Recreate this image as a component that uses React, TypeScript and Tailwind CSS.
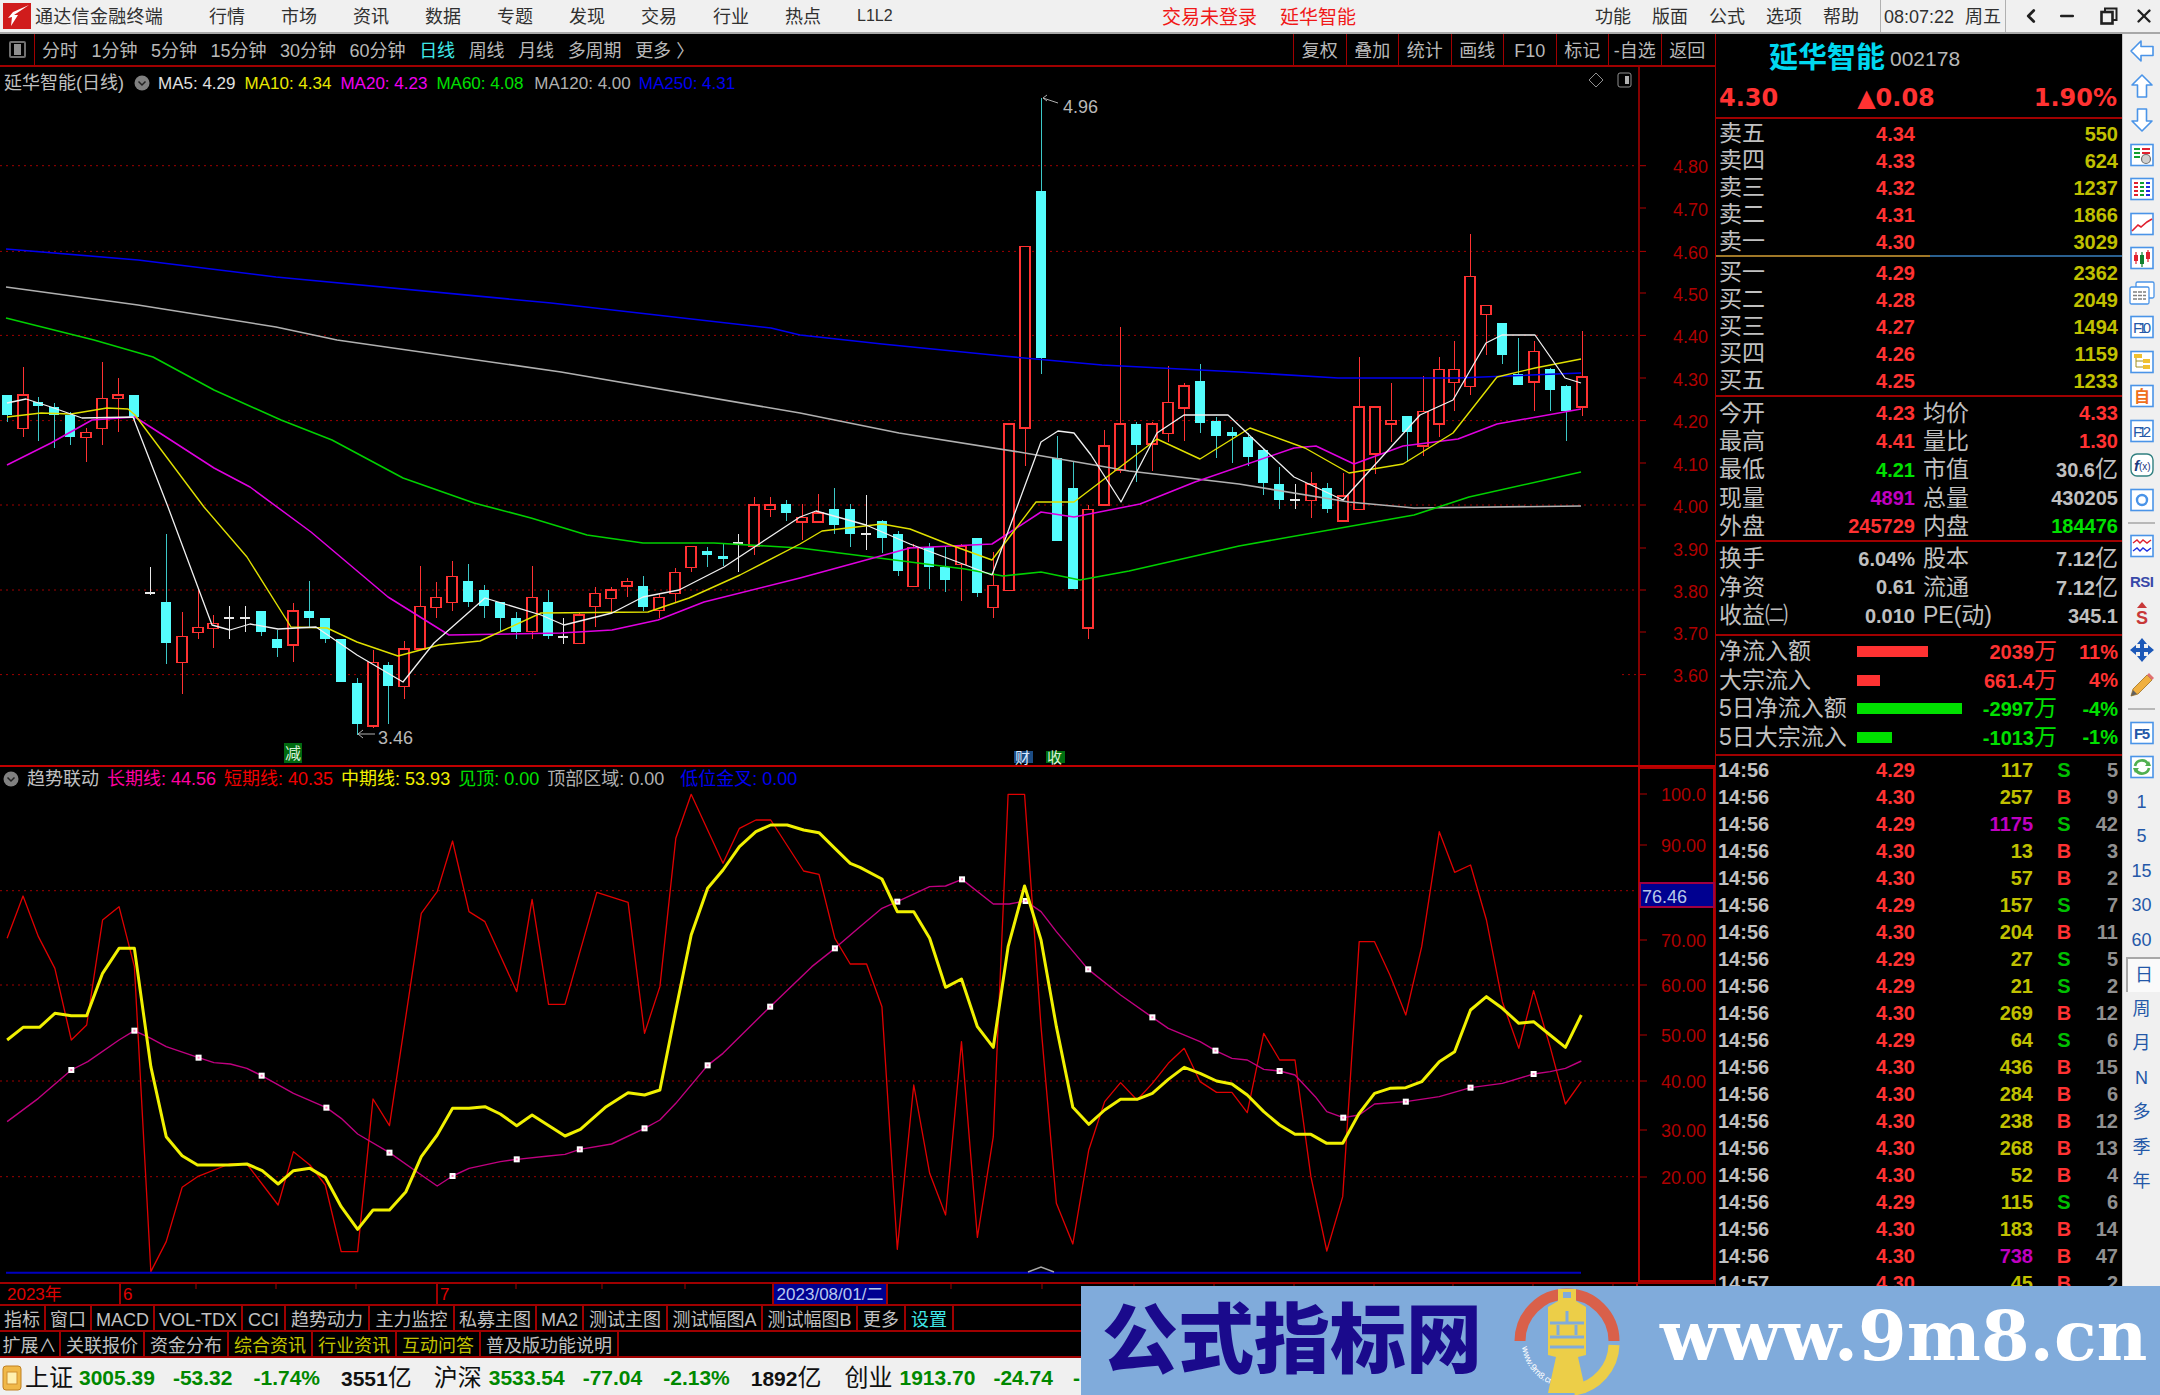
import { ChevronLeft, Minus, X } from "lucide-react";
import type { ReactNode } from "react";

type Pt = number[];

const RED = "#ff3232";
const CYAN = "#54fcfc";

// candles read from the chart: hi, bodyTop, bodyBottom, lo, kind (r red, c cyan, d doji)
type Raw = [number, number, number, number, "r" | "c" | "d"];
const leftRaw: Raw[] = [
  [165, 165, 225, 245, "c"], [80, 165, 265, 290, "r"], [170, 185, 198, 302, "c"], [190, 200, 225, 325, "c"], [215, 225, 290, 315, "c"],
  [265, 278, 292, 365, "r"], [65, 175, 265, 315, "r"], [115, 165, 175, 275, "r"], [165, 165, 230, 245, "c"], [682, 760, 760, 765, "d"],
  [583, 785, 910, 973, "c"], [817, 890, 968, 1063, "r"], [745, 863, 878, 897, "r"], [825, 850, 865, 923, "r"], [798, 835, 835, 897, "d"],
  [798, 835, 835, 875, "d"], [812, 812, 875, 888, "c"], [870, 898, 924, 950, "c"], [790, 813, 915, 965, "r"], [722, 812, 834, 860, "c"],
  [835, 835, 897, 910, "c"], [897, 897, 1027, 1027, "c"], [1015, 1028, 1153, 1185, "c"], [930, 967, 1158, 1165, "r"], [965, 975, 1037, 1153, "c"],
  [903, 927, 1040, 1078, "r"], [678, 800, 927, 927, "r"], [727, 772, 802, 835, "r"], [664, 710, 787, 812, "r"], [673, 722, 785, 800, "c"],
  [735, 750, 798, 835, "c"], [785, 785, 835, 875, "c"], [815, 835, 875, 897, "c"], [678, 772, 875, 897, "r"], [750, 785, 888, 897, "c"],
  [835, 890, 890, 912, "d"], [815, 825, 910, 910, "r"], [740, 760, 800, 862, "r"], [740, 750, 775, 820, "r"], [715, 725, 738, 772, "r"],
  [708, 737, 800, 812, "c"], [760, 772, 812, 835, "r"], [685, 697, 760, 787, "r"], [620, 620, 683, 695, "r"], [620, 632, 645, 682, "c"],
  [610, 647, 658, 678, "c"], [583, 608, 608, 695, "d"], [470, 495, 620, 645, "r"], [470, 495, 508, 532, "r"], [480, 493, 518, 542, "c"],
];
const rightRaw: Raw[] = [
  [950, 980, 990, 1030, "r"], [927, 970, 990, 990, "r"], [913, 960, 997, 1017, "c"], [950, 960, 1017, 1045, "c"], [930, 1018, 1018, 1053, "d"],
  [985, 988, 1027, 1060, "c"], [1010, 1018, 1100, 1110, "c"], [1040, 1047, 1134, 1134, "r"], [1037, 1047, 1090, 1140, "c"], [1047, 1090, 1120, 1147, "c"],
  [1040, 1045, 1085, 1168, "r"], [1027, 1027, 1148, 1158, "c"], [1058, 1132, 1182, 1205, "r"], [770, 770, 1144, 1144, "r"], [373, 373, 780, 865, "r"],
  [40, 248, 622, 658, "c"], [798, 847, 1033, 1033, "c"], [855, 913, 1140, 1140, "c"], [953, 962, 1228, 1252, "r"], [783, 820, 952, 952, "r"],
  [553, 770, 875, 880, "r"], [765, 770, 818, 900, "c"], [765, 770, 815, 875, "r"], [640, 722, 792, 810, "r"], [678, 685, 735, 808, "r"],
  [637, 675, 768, 790, "c"], [755, 763, 798, 847, "c"], [778, 788, 798, 857, "c"], [790, 800, 845, 865, "c"], [826, 828, 903, 930, "c"],
  [866, 904, 940, 960, "c"], [905, 940, 940, 960, "d"], [877, 905, 942, 980, "r"], [903, 914, 960, 970, "c"], [880, 932, 988, 988, "r"],
  [620, 733, 962, 962, "r"], [733, 733, 838, 883, "r"], [678, 763, 771, 810, "r"], [752, 752, 788, 855, "c"], [662, 743, 820, 843, "r"],
  [620, 648, 770, 800, "r"], [585, 648, 678, 742, "r"], [345, 440, 686, 705, "r"], [505, 505, 525, 617, "r"], [544, 544, 617, 637, "c"],
  [578, 658, 683, 683, "c"], [585, 608, 677, 742, "r"], [645, 648, 694, 742, "c"], [684, 685, 742, 808, "c"], [563, 665, 733, 752, "r"],
];
const toLeftY = (v: number) => 340 + v / 3;
const toRightY = (v: number) => 80 + v / 2.24;
const candles = [
  ...leftRaw.map((c) => ({ hi: toLeftY(c[0]), top: toLeftY(c[1]), bot: toLeftY(c[2]), lo: toLeftY(c[3]), kind: c[4] })),
  ...rightRaw.map((c) => ({ hi: toRightY(c[0]), top: toRightY(c[1]), bot: toRightY(c[2]), lo: toRightY(c[3]), kind: c[4] })),
];

const ma250 = "6,249 138,260 276,277 551,303 771,328 800,335 882,344 1003,356 1102,365 1239,372 1338,378 1458,378 1581,373";
const ma120 = "6,287 138,305 276,327 337,340 561,372 800,413 899,433 1019,452 1129,471 1239,484 1349,502 1414,508 1581,506";
const ma60 = "6,318 94,340 153,357 214,390 281,420 332,440 403,478 474,503 531,518 587,535 643,543 714,543 800,548 871,557 965,569 1003,576 1041,572 1080,580 1129,571 1239,546 1414,515 1469,497 1581,472";
const ma20 = "7,465 51,443 92,420 135,417 214,468 250,487 311,532 388,597 449,635 561,633 612,630 658,620 704,602 800,578 910,548 992,544 1041,512 1074,517 1140,504 1195,482 1294,448 1316,446 1354,464 1403,446 1458,439 1497,424 1581,409";
const ma10 = "7,417 41,413 71,414 107,408 128,409 135,415 204,507 247,557 291,627 327,628 357,642 398,656 439,645 480,641 541,613 648,612 689,598 740,575 800,544 822,531 882,524 910,529 948,544 992,560 1036,502 1074,502 1157,439 1200,459 1250,428 1305,448 1349,473 1403,464 1453,433 1497,377 1535,368 1581,359";
const ma5 = "7,403 26,399 51,407 82,418 133,417 168,507 212,625 230,630 250,624 278,629 316,627 357,655 403,682 434,643 485,598 541,615 564,625 612,613 643,597 679,590 724,567 800,517 816,511 866,525 910,544 992,575 1041,442 1058,431 1074,433 1091,455 1121,502 1157,433 1184,415 1228,415 1266,451 1294,477 1343,500 1420,415 1453,400 1486,343 1502,335 1535,335 1565,378 1581,383";

// sub chart lines, read in two parts
const subPts = (a: Pt[], b: Pt[]) =>
  [...a.map((p) => `${p[0] / 1.823},${760 + p[1] / 3}`), ...b.map((p) => `${860 + p[0] / 1.823},${760 + p[1] / 3}`)].join(" ");

const shortLine = subPts(
  [[13,535],[42,408],[70,530],[100,625],[130,840],[158,795],[187,480],[217,440],[245,620],[275,1535],[303,1445],[332,1282],[360,1250],[418,1212],[450,1212],[507,1335],[535,1175],[565,1215],[593,1275],[622,1475],[652,1475],[680,1017],[710,1097],[768,460],[797,395],[825,243],[855,455],[884,485],[942,695],[970,418],[1000,733],[1030,733],[1088,397],[1145,427],[1175,820],[1203,680],[1232,235],[1260,103],[1318,310],[1348,205],[1378,180],[1405,180],[1465,333],[1493,343],[1522,535],[1550,612]],
  [[12,612],[40,740],[68,1468],[98,975],[127,1240],[156,1365],[185,845],[214,1432],[243,1130],[270,103],[300,103],[330,800],[358,1330],[388,1452],[417,1170],[446,1025],[475,968],[505,1020],[533,970],[562,910],[591,865],[620,965],[650,997],[678,997],[706,1058],[736,820],[765,900],[793,900],[822,1250],[851,1473],[880,1310],[910,545],[938,545],[966,645],[995,765],[1024,560],[1056,215],[1084,337],[1113,315],[1142,480],[1171,725],[1201,865],[1228,692],[1258,860],[1286,1032],[1315,965]],
);
const midLine = subPts(
  [[13,840],[42,802],[72,802],[100,760],[130,767],[158,767],[187,640],[217,565],[245,565],[275,920],[303,1130],[332,1187],[360,1215],[418,1215],[450,1212],[478,1232],[507,1272],[535,1232],[565,1225],[593,1252],[622,1340],[652,1408],[680,1350],[710,1350],[740,1295],[768,1190],[797,1125],[825,1045],[855,1045],[884,1040],[912,1062],[942,1097],[970,1065],[1030,1128],[1058,1108],[1105,1040],[1145,998],[1175,1005],[1203,990],[1232,750],[1260,525],[1290,385],[1318,330],[1348,260],[1378,215],[1405,195],[1435,195],[1465,210],[1493,218],[1522,265],[1550,310]],
  [[0,322],[40,357],[68,455],[98,455],[127,535],[156,682],[185,657],[214,800],[243,862],[270,560],[300,378],[330,540],[358,800],[388,1042],[417,1093],[446,1050],[475,1018],[505,1018],[533,1000],[562,958],[591,922],[620,940],[650,963],[678,972],[706,1005],[736,1055],[765,1095],[793,1123],[822,1123],[851,1150],[880,1150],[910,1060],[938,1000],[966,985],[995,983],[1024,965],[1056,905],[1084,875],[1113,750],[1142,710],[1171,745],[1201,790],[1228,785],[1258,825],[1286,862],[1315,765]],
);
const longLine = subPts(
  [[13,1085],[70,1015],[130,930],[160,905],[217,840],[245,812],[275,835],[303,860],[362,893],[390,908],[420,912],[450,925],[477,947],[535,1000],[595,1043],[622,1075],[652,1122],[710,1178],[768,1245],[797,1278],[825,1248],[855,1225],[912,1205],[942,1198],[1000,1188],[1030,1183],[1057,1168],[1115,1152],[1175,1105],[1203,1080],[1232,1030],[1290,916],[1318,880],[1404,740],[1480,620],[1522,565]],
  [[0,500],[40,445],[68,425],[127,380],[156,378],[186,358],[243,432],[272,432],[302,423],[330,455],[358,515],[416,628],[475,705],[533,772],[562,805],[620,845],[648,872],[678,895],[706,900],[736,928],[765,933],[793,945],[830,1010],[851,1055],[881,1073],[910,1065],[938,1032],[995,1025],[1056,1010],[1113,983],[1171,970],[1228,942],[1258,935],[1286,925],[1315,903]],
);
const markers = [
  ...[[130,930],[245,812],[362,893],[477,947],[595,1043],[710,1178],[825,1248],[942,1198],[1057,1168],[1175,1105],[1290,916],[1404,740],[1522,565]].map((p) => [p[0] / 1.823, 760 + p[1] / 3]),
  ...[[68,425],[186,358],[302,423],[416,628],[533,772],[648,872],[765,933],[881,1073],[995,1025],[1113,983],[1228,942]].map((p) => [860 + p[0] / 1.823, 760 + p[1] / 3]),
];

function MainChart() {
  const levels = [["4.80", 165.7], ["4.70", 208], ["4.60", 251.4], ["4.50", 293], ["4.40", 335.4], ["4.30", 378], ["4.20", 420.6], ["4.10", 463], ["4.00", 505], ["3.90", 548], ["3.80", 590], ["3.70", 632], ["3.60", 674.6]] as [string, number][];
  return (
    <svg viewBox="0 67 1715 698" className="block w-[1715px] h-[698px]">
      {[165.7, 251.4, 335.4, 420.6, 505, 590].map((y) => (
        <line key={y} x1={0} x2={1638} y1={y} y2={y} stroke="#a00000" strokeWidth={1} strokeDasharray="2 4" />
      ))}
      <line x1={0} x2={538} y1={674.6} y2={674.6} stroke="#a00000" strokeDasharray="2 4" />
      <line x1={1622} x2={1638} y1={674.6} y2={674.6} stroke="#a00000" strokeDasharray="2 4" />
      <line x1={1639} x2={1639} y1={67} y2={765} stroke="#b00000" strokeWidth={1.5} />
      {levels.map(([t, y]) => (
        <g key={t}>
          <line x1={1640} x2={1646} y1={y} y2={y} stroke="#b00000" />
          <text x={1708} y={y + 7.5} textAnchor="end" fontSize={18} fill="#b00000">{t}</text>
        </g>
      ))}
      {candles.map((c, i) => {
        const x = Math.round(6.6 + 15.91 * i);
        if (c.kind === "d") {
          return (
            <g key={i} stroke="#e8e8e8" shapeRendering="crispEdges">
              <line x1={x} x2={x} y1={c.hi} y2={c.lo} />
              <line x1={x - 5} x2={x + 5} y1={c.top} y2={c.top} strokeWidth={2} />
            </g>
          );
        }
        const color = c.kind === "r" ? RED : CYAN;
        return (
          <g key={i} shapeRendering="crispEdges">
            <line x1={x} x2={x} y1={c.hi} y2={c.lo} stroke={c.kind === "r" ? RED : "#3cc8c8"} />
            <rect x={x - 5} y={c.top} width={10} height={c.bot - c.top} fill={c.kind === "r" ? "#000000" : color} stroke={color} strokeWidth={c.kind === "r" ? 1.5 : 0} />
          </g>
        );
      })}
      <g fill="none" strokeLinejoin="round">
        <polyline points={ma250} stroke="#0000f0" strokeWidth={1.6} />
        <polyline points={ma120} stroke="#b0b0b0" strokeWidth={1.6} />
        <polyline points={ma60} stroke="#00d000" strokeWidth={1.6} />
        <polyline points={ma20} stroke="#e000e0" strokeWidth={1.5} />
        <polyline points={ma10} stroke="#e0e000" strokeWidth={1.4} />
        <polyline points={ma5} stroke="#f0f0f0" strokeWidth={1.3} />
      </g>
      {/* high and low marks */}
      <path d="M1043 98 L1058 103 M1043 98 L1047 95 M1043 98 L1047 101" stroke="#b0b0b0" fill="none" />
      <text x={1063} y={113} fontSize={18} fill="#b8b8b8">4.96</text>
      <path d="M375 734 H358 M358 734 L363 730 M358 734 L363 738" stroke="#b0b0b0" fill="none" />
      <text x={378} y={744} fontSize={18} fill="#b8b8b8">3.46</text>
      <rect x={284} y={743} width={18} height={20} fill="#006a10" />
      <text x={285} y={759} fontSize={16} fill="#d8f0d8">减</text>
      <rect x={1014} y={751} width={19} height={12} fill="#1c4c84" />
      <text x={1015} y={763} fontSize={15} fill="#d8e8ff">财</text>
      <rect x={1046} y={751} width={19} height={12} fill="#007010" />
      <text x={1047} y={763} fontSize={15} fill="#d8f0d8">收</text>
      {/* corner buttons */}
      <path d="M1596 73 L1603 80 L1596 87 L1589 80 Z" fill="none" stroke="#909090" />
      <rect x={1618} y={73} width={13} height={14} rx={2} fill="none" stroke="#909090" />
      <rect x={1625} y={76} width={4} height={8} fill="#b0b0b0" />
    </svg>
  );
}

function SubChart() {
  const labels = [["100.0", 794], ["90.00", 845], ["70.00", 940], ["60.00", 985], ["50.00", 1035], ["40.00", 1081], ["30.00", 1130], ["20.00", 1177]] as [string, number][];
  return (
    <svg viewBox="0 767 1715 515" className="block w-[1715px] h-[515px]">
      {[890.7, 985, 1081, 1176.7].map((y) => (
        <line key={y} x1={0} x2={1638} y1={y} y2={y} stroke="#a00000" strokeDasharray="2 4" />
      ))}
      <rect x={1639} y={768} width={75} height={513} fill="none" stroke="#b00000" strokeWidth={2} />
      {labels.map(([t, y]) => (
        <g key={t}>
          <line x1={1640} x2={1647} y1={y} y2={y} stroke="#b00000" />
          <text x={1706} y={y + 7} textAnchor="end" fontSize={18} fill="#b00000">{t}</text>
        </g>
      ))}
      <polyline points={shortLine} fill="none" stroke="#e00000" strokeWidth={1.3} strokeLinejoin="round" />
      <polyline points={longLine} fill="none" stroke="#c00080" strokeWidth={1.4} strokeLinejoin="round" />
      {markers.map((m) => (
        <g key={m[0]}>
          <rect x={m[0] - 3} y={m[1] - 3} width={6} height={6} fill="#ffffff" />
          <rect x={m[0] - 1} y={m[1] - 1} width={2} height={2} fill="#ff80c0" />
        </g>
      ))}
      <polyline points={midLine} fill="none" stroke="#f0f000" strokeWidth={3} strokeLinejoin="round" />
      <line x1={6} x2={1581} y1={1272.7} y2={1272.7} stroke="#0000c0" strokeWidth={2} />
      <path d="M1028 1272 L1041 1267 L1054 1272" fill="none" stroke="#a8a8a8" strokeWidth={1.5} />
      <rect x={1640} y={883} width={74} height={24} fill="#000090" stroke="#a00040" strokeWidth={2} />
      <text x={1642} y={903} fontSize={18} fill="#b8c8e8">76.46</text>
    </svg>
  );
}

function DownDot() {
  return (
    <svg viewBox="0 0 16 16" className="w-4 h-4 shrink-0">
      <circle cx={8} cy={8} r={7.5} fill="#808080" />
      <path d="M4.5 6.5 L8 10 L11.5 6.5" fill="none" stroke="#202020" strokeWidth={1.5} />
    </svg>
  );
}

const row1 = [
  { t: "指标", c: "w-[46px] text-[#c0c0c0]" },
  { t: "窗口", c: "w-[46px] text-[#c0c0c0]" },
  { t: "MACD", c: "w-[63px] text-[#c0c0c0]" },
  { t: "VOL-TDX", c: "w-[88px] text-[#c0c0c0]" },
  { t: "CCI", c: "w-[43px] text-[#c0c0c0]" },
  { t: "趋势动力", c: "w-[84px] text-[#c0c0c0]" },
  { t: "主力监控", c: "w-[85px] text-[#c0c0c0]" },
  { t: "私募主图", c: "w-[82px] text-[#c0c0c0]" },
  { t: "MA2", c: "w-[47px] text-[#c0c0c0]" },
  { t: "测试主图", c: "w-[84px] text-[#c0c0c0]" },
  { t: "测试幅图A", c: "w-[95px] text-[#c0c0c0]" },
  { t: "测试幅图B", c: "w-[95px] text-[#c0c0c0]" },
  { t: "更多", c: "w-[48px] text-[#c0c0c0]" },
  { t: "设置", c: "w-[48px] text-[#40e8e8]" },
];
const row2 = [
  { t: "扩展∧", c: "w-[61px] text-[#c0c0c0]" },
  { t: "关联报价", c: "w-[84px] text-[#c0c0c0]" },
  { t: "资金分布", c: "w-[84px] text-[#c0c0c0]" },
  { t: "综合资讯", c: "w-[84px] text-[#c0c000]" },
  { t: "行业资讯", c: "w-[84px] text-[#c0c000]" },
  { t: "互动问答", c: "w-[84px] text-[#c0c000]" },
  { t: "普及版功能说明", c: "w-[138px] text-[#c0c0c0]" },
];

const dateTicks = [196, 276, 356, 516, 602, 685, 951, 1042, 1134, 1214, 1294, 1374, 1453, 1533, 1613];

function TabRow({ items }: { items: { t: string; c: string }[] }) {
  return (
    <div className="flex shrink-0 h-[26px] border-b-2 border-[#a00000]">
      {items.map((it) => (
        <div key={it.t} className={`flex items-center justify-center pt-[4px] border-r-2 border-[#a00000] text-[18px] leading-none whitespace-nowrap ${it.c}`}>
          {it.t}
        </div>
      ))}
    </div>
  );
}

function LeftColumn() {
  return (
    <div className="w-[1715px] shrink-0 flex flex-col">
      {/* period toolbar */}
      <div className="h-[33px] shrink-0 flex items-center border-b-2 border-[#a00000] text-[18px] text-[#b8b8b8] leading-none">
        <div className="w-[35px] h-full flex items-center justify-center border-r border-[#a00000]">
          <div className="w-[17px] h-[17px] rounded-[2px] border-2 border-[#707070] flex justify-center items-center">
            <div className="w-[7px] h-[11px] bg-[#909090]" />
          </div>
        </div>
        <div className="flex items-center gap-[13.5px] ml-[7px] pt-[2px]">
          <span>分时</span>
          <span>1分钟</span>
          <span>5分钟</span>
          <span>15分钟</span>
          <span>30分钟</span>
          <span>60分钟</span>
          <span className="text-[#40e8e8]">日线</span>
          <span>周线</span>
          <span>月线</span>
          <span>多周期</span>
          <span>更多 〉</span>
        </div>
        <div className="ml-auto mr-[2px] flex h-full">
          {["复权", "叠加", "统计", "画线", "F10", "标记", "-自选", "返回"].map((t) => (
            <div key={t} className="w-[52.5px] flex items-center justify-center pt-[2px] border-l border-[#a00000] whitespace-nowrap">{t}</div>
          ))}
        </div>
      </div>
      {/* kline */}
      <div className="relative shrink-0 h-[698px]">
        <MainChart />
        <div className="absolute left-[4px] top-[6px] flex items-center h-[20px] text-[17px] leading-none whitespace-nowrap">
          <span className="text-[18px] text-[#c0c0c0]">延华智能(日线)</span>
          <span className="ml-[10px]"><DownDot /></span>
          <span className="ml-[8px] text-[#e0e0e0]">MA5: 4.29</span>
          <span className="ml-[9px] text-[#e8e800]">MA10: 4.34</span>
          <span className="ml-[9px] text-[#f000f0]">MA20: 4.23</span>
          <span className="ml-[9px] text-[#00e000]">MA60: 4.08</span>
          <span className="ml-[11px] text-[#b0b0b0]">MA120: 4.00</span>
          <span className="ml-[8px] text-[#0000f0]">MA250: 4.31</span>
        </div>
      </div>
      <div className="h-[2px] shrink-0 bg-[#c00000]" />
      {/* indicator */}
      <div className="relative shrink-0 h-[515px]">
        <SubChart />
        <div className="absolute left-[3px] top-[2px] flex items-center h-[20px] text-[18px] leading-none whitespace-nowrap">
          <DownDot />
          <span className="ml-[8px] text-[#c0c0c0]">趋势联动</span>
          <span className="ml-[8px] text-[#ff00a0]">长期线: 44.56</span>
          <span className="ml-[8px] text-[#f00000]">短期线: 40.35</span>
          <span className="ml-[8px] text-[#f0f000]">中期线: 53.93</span>
          <span className="ml-[8px] text-[#00e000]">见顶: 0.00</span>
          <span className="ml-[8px] text-[#b0b0b0]">顶部区域: 0.00</span>
          <span className="ml-[16px] text-[#0000f0]">低位金叉: 0.00</span>
        </div>
      </div>
      {/* date axis */}
      <div className="relative h-[24px] shrink-0 flex border-y-2 border-[#a00000] text-[17px] leading-none text-[#e00000]">
        <div className="w-[119px] flex items-center pl-[7px]">2023年</div>
        <div className="w-[317px] flex items-center pl-[2px] border-l-2 border-[#a00000]">6</div>
        <div className="w-[336px] flex items-center pl-[2px] border-l-2 border-[#a00000]">7</div>
        <div className="w-[116px] flex items-center justify-center bg-[#000090] text-[#b8c8f0] border-x-2 border-[#a00000]">2023/08/01/二</div>
        <div className="w-[750px] border-r-2 border-[#a00000]" />
        <svg viewBox="0 0 1715 5" className="absolute left-0 top-0 w-[1715px] h-[5px]">
          {dateTicks.map((x) => (
            <line key={x} x1={x} x2={x} y1={0} y2={5} stroke="#a00000" />
          ))}
        </svg>
      </div>
      <TabRow items={row1} />
      <TabRow items={row2} />
    </div>
  );
}

const sells = [["卖五", "4.34", "550"], ["卖四", "4.33", "624"], ["卖三", "4.32", "1237"], ["卖二", "4.31", "1866"], ["卖一", "4.30", "3029"]];
const buys = [["买一", "4.29", "2362"], ["买二", "4.28", "2049"], ["买三", "4.27", "1494"], ["买四", "4.26", "1159"], ["买五", "4.25", "1233"]];
const ticks = [
  ["14:56", "4.29", "117", "S", "5"], ["14:56", "4.30", "257", "B", "9"], ["14:56", "4.29", "1175", "S", "42"], ["14:56", "4.30", "13", "B", "3"],
  ["14:56", "4.30", "57", "B", "2"], ["14:56", "4.29", "157", "S", "7"], ["14:56", "4.30", "204", "B", "11"], ["14:56", "4.29", "27", "S", "5"],
  ["14:56", "4.29", "21", "S", "2"], ["14:56", "4.30", "269", "B", "12"], ["14:56", "4.29", "64", "S", "6"], ["14:56", "4.30", "436", "B", "15"],
  ["14:56", "4.30", "284", "B", "6"], ["14:56", "4.30", "238", "B", "12"], ["14:56", "4.30", "268", "B", "13"], ["14:56", "4.30", "52", "B", "4"],
  ["14:56", "4.29", "115", "S", "6"], ["14:56", "4.30", "183", "B", "14"], ["14:56", "4.30", "738", "B", "47"], ["14:57", "4.30", "45", "B", "2"],
];

function QuoteRow({ r }: { r: string[] }) {
  return (
    <div className="flex items-center h-[27px] pl-[3px] pr-[4px] leading-none">
      <span className="w-[100px] text-[23px] text-[#c0c0c0]">{r[0]}</span>
      <span className="w-[96px] text-right font-bold text-[#ff3232]">{r[1]}</span>
      <span className="flex-1 text-right font-bold text-[#c0c000]">{r[2]}</span>
    </div>
  );
}

function StatRow({ a, b, c, d, bc, dc, h, unit }: { a: string; b: string; c: string; d: string; bc: string; dc: string; h: string; unit?: string }) {
  return (
    <div className={`flex items-center pl-[3px] pr-[4px] leading-none ${h}`}>
      <span className="w-[100px] text-[23px] text-[#c0c0c0] whitespace-nowrap">{a}</span>
      <span className={`w-[96px] text-right font-bold ${bc}`}>{b}</span>
      <span className="ml-[8px] text-[23px] text-[#c0c0c0] whitespace-nowrap">{c}</span>
      <span className={`flex-1 text-right font-bold ${dc}`}>
        {d}
        {unit && <span className="text-[23px] font-normal">{unit}</span>}
      </span>
    </div>
  );
}

function FlowRow({ a, bar, v, p, color }: { a: string; bar: string; v: string; p: string; color: string }) {
  return (
    <div className="flex items-center h-[28.5px] pl-[3px] pr-[4px] leading-none">
      <span className="w-[138px] shrink-0 text-[23px] text-[#c0c0c0] whitespace-nowrap">{a}</span>
      <div className="w-[200px] shrink-0 flex items-center justify-between">
        <div className={`h-[11px] ${bar}`} />
        <span className={`font-bold ${color}`}>{v}<span className="text-[23px] font-normal">万</span></span>
      </div>
      <span className={`flex-1 text-right font-bold ${color}`}>{p}</span>
    </div>
  );
}

function RightPanel() {
  return (
    <div className="w-[407px] shrink-0 flex flex-col border-l border-[#a00000] text-[20px] overflow-hidden">
      <div className="h-[85px] border-b-2 border-[#a00000] flex flex-col">
        <div className="h-[46px] pt-[2px] flex items-center pl-[53px]">
          <span className="text-[29px] font-bold text-[#00d8f0] leading-none">延华智能</span>
          <span className="ml-[5px] text-[21px] text-[#b8b8b8] leading-none">002178</span>
        </div>
        <div className="mt-[6px] flex items-center justify-between pl-[3px] pr-[5px] [font-family:'DejaVu_Sans',sans-serif] font-bold text-[24px] leading-none text-[#ff3232]">
          <span>4.30</span>
          <span className="-ml-[20px]">▲0.08</span>
          <span>1.90%</span>
        </div>
      </div>
      <div className="pt-[1px]">
        {sells.map((r) => <QuoteRow key={r[0]} r={r} />)}
      </div>
      <div className="h-[2px] flex">
        <div className="w-[214px] bg-[#a07828]" />
        <div className="flex-1 bg-[#2a6090]" />
      </div>
      <div className="pt-[2px] pb-[1px] border-b-2 border-[#a00000]">
        {buys.map((r) => <QuoteRow key={r[0]} r={r} />)}
      </div>
      <div className="pt-[2px] border-b-2 border-[#a00000]">
        <StatRow h="h-[28.3px]" a="今开" b="4.23" bc="text-[#ff3232]" c="均价" d="4.33" dc="text-[#ff3232]" />
        <StatRow h="h-[28.3px]" a="最高" b="4.41" bc="text-[#ff3232]" c="量比" d="1.30" dc="text-[#ff3232]" />
        <StatRow h="h-[28.3px]" a="最低" b="4.21" bc="text-[#00e000]" c="市值" d="30.6" unit="亿" dc="text-[#c0c0c0]" />
        <StatRow h="h-[28.3px]" a="现量" b="4891" bc="text-[#c000c0]" c="总量" d="430205" dc="text-[#c0c0c0]" />
        <StatRow h="h-[28.3px]" a="外盘" b="245729" bc="text-[#ff3232]" c="内盘" d="184476" dc="text-[#00e000]" />
      </div>
      <div className="pt-[2px] h-[94px] border-b-2 border-[#a00000]">
        <StatRow h="h-[28.5px]" a="换手" b="6.04%" bc="text-[#c0c0c0]" c="股本" d="7.12" unit="亿" dc="text-[#c0c0c0]" />
        <StatRow h="h-[28.5px]" a="净资" b="0.61" bc="text-[#c0c0c0]" c="流通" d="7.12" unit="亿" dc="text-[#c0c0c0]" />
        <StatRow h="h-[28.5px]" a="收益㈡" b="0.010" bc="text-[#c0c0c0]" c="PE(动)" d="345.1" dc="text-[#c0c0c0]" />
      </div>
      <div className="pt-[1px] h-[120px] border-b-2 border-[#a00000]">
        <FlowRow a="净流入额" bar="w-[71px] bg-[#ff3232]" v="2039" p="11%" color="text-[#ff3232]" />
        <FlowRow a="大宗流入" bar="w-[23px] bg-[#ff3232]" v="661.4" p="4%" color="text-[#ff3232]" />
        <FlowRow a="5日净流入额" bar="w-[105px] bg-[#00e000]" v="-2997" p="-4%" color="text-[#00e000]" />
        <FlowRow a="5日大宗流入" bar="w-[35px] bg-[#00e000]" v="-1013" p="-1%" color="text-[#00e000]" />
      </div>
      <div className="flex-1 overflow-hidden font-bold">
        {ticks.map((r, i) => (
          <div key={i} className="flex items-center h-[27px] pl-[2px] pr-[4px] leading-none">
            <span className="w-[84px] text-[#c0c0c0]">{r[0]}</span>
            <span className="w-[113px] text-right text-[#ff3232]">{r[1]}</span>
            <span className={r[2] === "1175" || r[2] === "738" ? "w-[118px] text-right text-[#c000c0]" : "w-[118px] text-right text-[#c0c000]"}>{r[2]}</span>
            <span className={r[3] === "S" ? "w-[62px] text-center text-[#00c000]" : "w-[62px] text-center text-[#ff3232]"}>{r[3]}</span>
            <span className="flex-1 text-right text-[#909090]">{r[4]}</span>
          </div>
        ))}
      </div>
    </div>
  );
}

const BLUE = "#4a94e8";
const INK = "#2458a8";

function IconBox({ children }: { children: ReactNode }) {
  return (
    <svg viewBox="0 0 26 26" className="w-[26px] h-[26px]">
      <rect x={2} y={2.5} width={22} height={21} fill="#ffffff" stroke={BLUE} strokeWidth={1.6} />
      {children}
    </svg>
  );
}

function Arrow({ rot }: { rot: number }) {
  return (
    <svg viewBox="0 0 26 26" className="w-[26px] h-[26px]">
      <path d="M13 2 L23 12 H17.5 V24 H8.5 V12 H3 Z" transform={`rotate(${rot} 13 13)`} fill="#ffffff" stroke={BLUE} strokeWidth={1.6} strokeLinejoin="round" />
    </svg>
  );
}

const sideIcons: ReactNode[] = [
  <Arrow key="l" rot={270} />,
  <Arrow key="u" rot={0} />,
  <Arrow key="d" rot={180} />,
  <IconBox key="board">
    <path d="M5 7 H11 M5 11 H11 M5 15 H11" stroke="#10a030" strokeWidth={2} />
    <path d="M13 7 H21 M13 11 H21" stroke="#e02030" strokeWidth={2} />
    <circle cx={17} cy={17} r={4.5} fill="#d0d0d0" stroke="#707070" strokeWidth={1.2} />
  </IconBox>,
  <IconBox key="table">
    <path d="M5 7 H9 M5 11 H9 M5 15 H9 M5 19 H9" stroke="#e02030" strokeWidth={2} />
    <path d="M11 7 H15 M11 11 H15 M11 15 H15 M11 19 H15" stroke="#10a030" strokeWidth={2} />
    <path d="M17 7 H21 M17 11 H21 M17 15 H21 M17 19 H21" stroke="#2030e0" strokeWidth={2} />
  </IconBox>,
  <IconBox key="line">
    <path d="M3 20 L9 14 L12 16 L18 11 L23 8" stroke="#e02030" strokeWidth={1.6} fill="none" />
  </IconBox>,
  <IconBox key="candle">
    <path d="M7 7 V19 M19 5 V17" stroke="#e02030" strokeWidth={1.2} />
    <rect x={5} y={10} width={4} height={6} fill="#e02030" />
    <rect x={17} y={7} width={4} height={7} fill="#e02030" />
    <path d="M13 7 V22" stroke="#108030" strokeWidth={1.2} />
    <rect x={11} y={10} width={4} height={9} fill="#108030" />
  </IconBox>,
  <svg key="win" viewBox="0 0 26 26" className="w-[26px] h-[26px]">
    <rect x={7} y={2} width={18} height={16} rx={1.5} fill="#ffffff" stroke={BLUE} strokeWidth={1.3} />
    <rect x={1} y={7} width={19} height={17} rx={1.5} fill="#ffffff" stroke={BLUE} strokeWidth={1.3} />
    <path d="M4 12 H17 M4 15.5 H17 M4 19 H17" stroke="#808080" strokeWidth={1.6} strokeDasharray="4 1" />
  </svg>,
  <IconBox key="f10"><text x={4} y={19} fontSize={15} fill={INK} textLength={18}>F10</text></IconBox>,
  <IconBox key="tree">
    <path d="M7 7 V18 H14 M7 12 H14" stroke="#a09020" fill="none" />
    <rect x={5} y={5} width={8} height={4} fill="#f0c030" />
    <rect x={14} y={10} width={7} height={4} fill="#f0c030" />
    <rect x={14} y={16} width={7} height={4} fill="#f0c030" />
  </IconBox>,
  <IconBox key="zi"><text x={5} y={19} fontSize={16} fontWeight={700} fill="#f07020">自</text></IconBox>,
  <IconBox key="f12"><text x={4} y={19} fontSize={15} fill={INK} textLength={18}>F12</text></IconBox>,
  <svg key="fx" viewBox="0 0 26 26" className="w-[26px] h-[26px]">
    <rect x={2} y={2} width={22} height={22} rx={6} fill="#ffffff" stroke="#308080" strokeWidth={1.4} />
    <text x={5} y={19} fontSize={15} fontStyle="italic" fontWeight={700} fill="#203880">f</text>
    <text x={10} y={18} fontSize={10} fill="#203880">(x)</text>
  </svg>,
  <IconBox key="o"><circle cx={13} cy={13} r={5} fill="none" stroke={BLUE} strokeWidth={2.4} /></IconBox>,
  "sep",
  <IconBox key="wave">
    <path d="M4 10 L8 7 L11 10 L14 7 L18 10 L22 7" stroke="#e02030" strokeWidth={1.4} fill="none" />
    <path d="M4 18 L8 15 L11 18 L14 15 L18 18 L22 15" stroke="#2030e0" strokeWidth={1.4} fill="none" />
  </IconBox>,
  <svg key="rsi" viewBox="0 0 26 26" className="w-[26px] h-[26px]">
    <text x={1} y={19} fontSize={15} fontWeight={700} fill="#3848a8" textLength={24}>RSI</text>
  </svg>,
  <svg key="s" viewBox="0 0 26 26" className="w-[26px] h-[26px]">
    <text x={7} y={22} fontSize={18} fontWeight={700} fill="#c83838">S</text>
    <path d="M13 0 L18 6 H8 Z" fill="#c83838" />
  </svg>,
  <svg key="move" viewBox="0 0 26 26" className="w-[26px] h-[26px]">
    <path d="M13 1 L18 7 H15 V11 H19 V8 L25 13 L19 18 V15 H15 V19 H18 L13 25 L8 19 H11 V15 H7 V18 L1 13 L7 8 V11 H11 V7 H8 Z" fill="#1c58b8" />
  </svg>,
  <svg key="pen" viewBox="0 0 26 26" className="w-[26px] h-[26px]">
    <path d="M4 18 L18 4 L23 9 L9 23 L2 25 Z" fill="#f0b040" stroke="#a07020" strokeWidth={0.8} />
    <path d="M18 4 L20 2 L25 7 L23 9 Z" fill="#e07070" />
    <path d="M2 25 L4 19 L8 23 Z" fill="#606060" />
  </svg>,
  "sep2",
  <IconBox key="f5"><text x={5} y={19} fontSize={15} fontWeight={700} fill={INK} textLength={16}>F5</text></IconBox>,
  <IconBox key="ref">
    <path d="M6 12 A7 7 0 0 1 19 10 M20 14 A7 7 0 0 1 7 16" stroke="#50b050" strokeWidth={2.6} fill="none" />
    <path d="M16 12 L22 12 L20 7 Z M10 14 L4 14 L6 19 Z" fill="#50b050" />
  </IconBox>,
];

function Sidebar() {
  const periods = ["1", "5", "15", "30", "60", "日", "周", "月", "N", "多", "季", "年"];
  return (
    <div className="flex-1 bg-[#f0f0f0] flex flex-col border-l border-[#c8c8c8] overflow-hidden">
      {sideIcons.map((ic, i) => {
        if (ic === "sep") return <div key={i} className="h-[12px] flex items-center px-[5px]"><div className="h-[2px] w-full bg-[#b8b8b8]" /></div>;
        if (ic === "sep2") return <div key={i} className="h-[14px] flex items-center px-[5px]"><div className="h-[2px] w-full bg-[#b8b8b8]" /></div>;
        return <div key={i} className="h-[34.5px] shrink-0 flex items-center justify-center">{ic}</div>;
      })}
      {periods.map((p) => (
        <div
          key={p}
          className={
            p === "日"
              ? "h-[34.5px] shrink-0 ml-[3px] flex items-center justify-center text-[18px] leading-none text-[#2458a8] bg-[#fafafa] border-l-2 border-t-2 border-[#a8a8a8]"
              : "h-[34.5px] shrink-0 flex items-center justify-center text-[18px] leading-none text-[#2458a8]"
          }
        >
          {p}
        </div>
      ))}
    </div>
  );
}

function TopBar() {
  return (
    <div className="h-[34px] shrink-0 flex items-center bg-[#f0f0f0] border-b-2 border-[#a8a8a8] text-[18px] leading-none text-[#303030] whitespace-nowrap">
      <svg viewBox="0 0 28 26" className="ml-[3px] w-[28px] h-[26px] shrink-0">
        <rect width={28} height={26} fill="#d01c1c" />
        <path d="M26 2 L10 9 L5 15 L9 14 L8 23 L15 12 L11 12 Z" fill="#ffffff" />
      </svg>
      <span className="ml-[4px] w-[128px] tracking-[0.3px] pt-[2px]">通达信金融终端</span>
      <div className="ml-[46px] flex pt-[2px]">
        {["行情", "市场", "资讯", "数据", "专题", "发现", "交易", "行业", "热点"].map((t) => (
          <span key={t} className="w-[72px]">{t}</span>
        ))}
        <span className="w-[72px] text-[16px]">L1L2</span>
      </div>
      <span className="ml-[233px] pt-[2px] text-[19px] text-[#f01818]">交易未登录</span>
      <span className="ml-[23px] pt-[2px] text-[19px] text-[#f01818]">延华智能</span>
      <div className="ml-[239px] flex pt-[2px]">
        {["功能", "版面", "公式", "选项", "帮助"].map((t) => (
          <span key={t} className="w-[57px]">{t}</span>
        ))}
      </div>
      <div className="h-full border-l border-[#b0b0b0] flex items-center pl-[3px] pr-[4px] pt-[2px]">
        <span>08:07:22</span>
        <span className="ml-[11px]">周五</span>
      </div>
      <div className="h-full border-l border-[#b0b0b0] flex-1 flex items-center text-[#202020]">
        <ChevronLeft className="ml-[14px] w-[22px] h-[22px]" strokeWidth={3} />
        <Minus className="ml-[15px] w-[20px] h-[20px]" strokeWidth={3} />
        <svg viewBox="0 0 18 18" className="ml-[23px] w-[18px] h-[18px]">
          <path d="M5 5 V1.5 H16.5 V13 H13" fill="none" stroke="#202020" strokeWidth={2} />
          <rect x={1.5} y={5} width={11} height={11.5} fill="none" stroke="#202020" strokeWidth={2.6} />
        </svg>
        <X className="ml-[15px] w-[22px] h-[22px]" strokeWidth={2.6} />
      </div>
    </div>
  );
}

function StatusBar() {
  const green = "font-bold text-[#008800]";
  return (
    <div className="h-[37px] shrink-0 flex items-center pt-[2px] bg-[#f0f0f0] text-[21px] leading-none text-[#101010] whitespace-nowrap">
      <svg viewBox="0 0 20 26" className="ml-[2px] w-[20px] h-[26px] shrink-0">
        <rect x={1} y={1} width={18} height={24} rx={3} fill="#f0b848" stroke="#c08020" />
        <rect x={5} y={7} width={10} height={12} fill="#fff0b0" stroke="#d09030" />
      </svg>
      <span className="ml-[3px] text-[24px]">上证</span>
      <span className={`ml-[6px] ${green}`}>3005.39</span>
      <span className={`ml-[18px] ${green}`}>-53.32</span>
      <span className={`ml-[21px] ${green}`}>-1.74%</span>
      <span className="ml-[21px] font-bold">3551<span className="text-[24px] font-normal">亿</span></span>
      <span className="ml-[22px] text-[24px]">沪深</span>
      <span className={`ml-[7px] ${green}`}>3533.54</span>
      <span className={`ml-[18px] ${green}`}>-77.04</span>
      <span className={`ml-[21px] ${green}`}>-2.13%</span>
      <span className="ml-[21px] font-bold">1892<span className="text-[24px] font-normal">亿</span></span>
      <span className="ml-[23px] text-[24px]">创业</span>
      <span className={`ml-[7px] ${green}`}>1913.70</span>
      <span className={`ml-[18px] ${green}`}>-24.74</span>
      <span className={`ml-[20px] ${green}`}>-</span>
    </div>
  );
}

function Watermark() {
  return (
    <div className="absolute right-0 bottom-0 w-[1079px] h-[109px] bg-[#80abdb] flex items-center overflow-hidden">
      <span className="ml-[21px] w-[412px] text-[76px] font-black leading-none text-[#1a0a8c] whitespace-nowrap">公式指标网</span>
      <svg viewBox="0 0 106 108" className="w-[106px] h-[108px] shrink-0">
        <path d="M6 54 A46 46 0 0 1 100 54" fill="none" stroke="#d9604a" strokeWidth={11} />
        <path d="M100 58 A47 47 0 0 1 60 103" fill="none" stroke="#ecce48" strokeWidth={11} />
        <path id="ringText" d="M8 60 A46 46 0 0 0 48 100" fill="none" />
        <text fontSize={9} fill="#ffffff"><textPath href="#ringText">www.9m8.cn</textPath></text>
        <path d="M44 2 H62 V14 L72 20 V68 L64 70 L72 106 H34 L42 70 L34 68 V20 L44 14 Z" fill="#ecce48" />
        <rect x={49} y={5} width={8} height={6} fill="#80abdb" />
        <path d="M36 36 H70 M36 50 H70 M36 60 H70 M53 24 V36 M44 38 V48 M62 38 V48" stroke="#80abdb" strokeWidth={3} />
      </svg>
      <span className="ml-[40px] -mt-[10px] [font-family:'DejaVu_Serif',serif] font-bold text-[70px] leading-none text-white whitespace-nowrap">www.9m8.cn</span>
    </div>
  );
}

export default function App() {
  return (
    <div className="relative w-[2160px] h-[1395px] overflow-hidden bg-black flex flex-col [font-family:'Liberation_Sans','Noto_Sans_CJK_SC',sans-serif]">
      <TopBar />
      <div className="flex-1 min-h-0 flex">
        <LeftColumn />
        <RightPanel />
        <Sidebar />
      </div>
      <StatusBar />
      <Watermark />
    </div>
  );
}
